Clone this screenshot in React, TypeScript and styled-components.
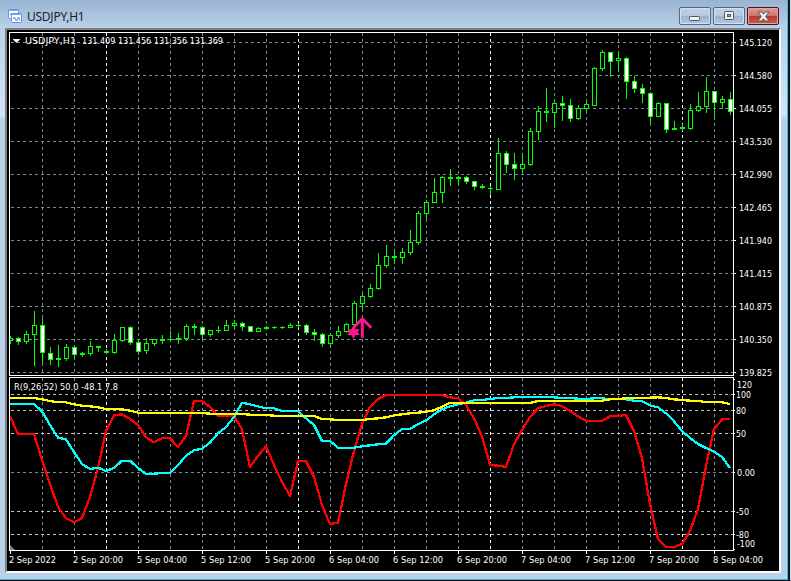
import React from "react";
import styled, { createGlobalStyle } from "styled-components";

const Global = createGlobalStyle`
  html, body { margin: 0; padding: 0; background: #b9d1ea; overflow: hidden; }
  * { box-sizing: border-box; }
`;

const Window = styled.div`
  width: 791px;
  height: 581px;
  display: flex;
  flex-direction: column;
  background: #b9d1ea;
  border-right: 1px solid #d5dbe2;
  border-bottom: 1px solid #101820;
`;

const Edge = styled.div`
  flex: 1;
  display: flex;
  flex-direction: column;
  border-right: 2px solid #101418;
`;

const Frame = styled.div`
  flex: 1;
  display: flex;
  flex-direction: column;
  padding: 0 6px 6px 5px;
  border-right: 1px solid #35c0dc;
  border-bottom: 1px solid #35b4cf;
  background: linear-gradient(180deg, #99b4d1 0, #b9d1ea 28px, #d3e3f4 115px, #b9d1ea 119px);
`;

const TitleBar = styled.header`
  height: 28px;
  display: flex;
  align-items: flex-start;
  padding: 0 2px 0 3px;
`;

const TitleIcon = styled.svg`
  width: 15px;
  height: 15px;
  margin-top: 9px;
`;

const Title = styled.h1`
  margin: 7px 0 0 4px;
  flex: 1;
  font: 400 12px/19px "Noto Sans", sans-serif;
  letter-spacing: -0.25px;
  color: #1c222b;
`;

const Buttons = styled.div`
  display: flex;
  gap: 2px;
  margin-top: 7px;
`;

const CaptionButton = styled.button<{ $close?: boolean }>`
  width: 32px;
  height: 18px;
  padding: 0;
  display: flex;
  align-items: center;
  justify-content: center;
  border: 1px solid ${(p) => (p.$close ? "#431422" : "#56697f")};
  border-radius: 2px;
  box-shadow: inset 0 0 0 1px ${(p) => (p.$close ? "#e3a79f" : "#d3e0ef")};
  background: ${(p) =>
    p.$close
      ? "linear-gradient(180deg, #dd9c91 0, #cf7569 48%, #b5382a 50%, #c8604a 100%)"
      : "linear-gradient(180deg, #c1d2e6 0, #b4c8df 48%, #9bb3cf 50%, #b1c8e1 100%)"};
`;

const Client = styled.main`
  flex: 1;
  border-style: solid;
  border-width: 2px;
  border-color: #808080 #f6f8fa #f6f8fa #808080;
  background: #000;
  overflow: hidden;
`;

const Chart = styled.svg`
  display: block;
  text {
    font-family: "DejaVu Sans Condensed", "DejaVu Sans", sans-serif;
    font-size: 9.5px;
    fill: #fff;
  }
`;

type Kind = "h" | "w" | "d";
type Candle = [number, number, number, number, Kind];

// high, body top, body bottom, low; h = hollow, w = filled, d = doji
const candles: Candle[] = [
  [336,338,341,344,"h"],[337,338,342,345,"w"],[331,334,342,344,"h"],[311,325,335,366,"h"],
  [318,325,353,363,"w"],[347,353,360,365,"w"],[345,358,360,367,"d"],[344,347,359,361,"h"],
  [346,347,355,358,"w"],[352,353,355,357,"d"],[341,346,354,356,"h"],[346,346,348,352,"d"],
  [349,351,353,354,"d"],[334,340,353,354,"h"],[327,327,341,342,"h"],[326,327,343,345,"w"],
  [340,342,352,355,"w"],[338,343,351,354,"h"],[339,339,344,346,"h"],[335,339,341,344,"d"],
  [331,339,340,342,"d"],[333,338,340,344,"d"],[324,326,339,341,"h"],[324,326,328,335,"d"],
  [326,327,335,339,"w"],[330,330,335,337,"h"],[326,330,331,333,"d"],[320,325,331,331,"h"],
  [320,323,326,329,"h"],[322,323,327,331,"w"],[326,326,332,332,"w"],[327,328,332,332,"h"],
  [326,327,329,330,"d"],[326,327,328,329,"d"],[326,327,328,329,"d"],[323,325,328,328,"h"],
  [323,325,326,328,"d"],[324,325,333,335,"w"],[329,332,335,341,"w"],[333,334,344,347,"w"],
  [333,335,344,346,"h"],[326,331,336,338,"h"],[323,324,332,333,"h"],[301,303,325,325,"h"],
  [293,296,304,310,"h"],[284,288,297,298,"h"],[253,265,289,290,"h"],[245,256,266,268,"h"],
  [249,256,258,264,"d"],[248,252,258,264,"h"],[230,242,253,255,"h"],[211,213,243,245,"h"],
  [200,202,214,219,"h"],[178,192,203,203,"h"],[176,177,193,203,"h"],[169,177,179,186,"d"],
  [176,177,179,185,"d"],[176,177,182,184,"w"],[181,181,187,190,"w"],[184,186,188,189,"d"],
  [186,188,189,195,"d"],[138,153,190,190,"h"],[151,153,165,173,"w"],[153,164,169,180,"w"],
  [153,164,169,172,"h"],[128,131,165,166,"h"],[106,111,132,140,"h"],[88,111,113,122,"d"],
  [102,103,113,128,"h"],[96,103,106,121,"w"],[99,105,119,122,"w"],[105,108,119,120,"h"],
  [100,104,109,111,"h"],[67,68,106,106,"h"],[50,52,69,71,"h"],[52,52,62,77,"w"],
  [52,58,61,72,"h"],[57,58,82,99,"w"],[76,81,89,93,"w"],[84,88,94,103,"w"],
  [92,93,117,123,"w"],[102,103,117,117,"h"],[103,103,130,133,"w"],[121,128,130,130,"d"],
  [124,127,129,131,"d"],[104,110,129,130,"h"],[92,106,111,112,"h"],[77,91,107,113,"h"],
  [91,91,103,118,"w"],[96,99,103,109,"h"],[92,99,112,115,"w"],
];

// Oscillator samples, in thirds of a pixel below y = 370, one per bar
const red = [
  139,192,192,192,270,342,411,444,457,444,381,294,183,136,133,147,165,202,217,205,205,231,198,93,93,111,138,138,138,
  178,291,258,229,285,336,378,273,273,321,405,462,458,342,243,162,110,87,75,75,75,75,75,75,75,75,82,85,105,145,199,285,287,
  291,223,180,141,115,108,103,108,123,139,153,153,153,139,138,135,183,264,402,507,531,531,522,483,417,288,177,148,147,
];
const cyan = [
  102,102,102,102,124,165,203,208,247,282,297,293,303,294,272,272,294,312,311,309,309,286,257,241,236,218,190,171,141,
  98,103,109,115,115,123,123,124,145,165,213,213,233,234,233,229,226,223,221,196,177,176,163,151,133,118,109,103,98,91,90,87,84,
  84,82,81,81,81,81,82,84,84,86,87,85,85,88,88,88,92,94,106,112,130,154,183,204,222,234,245,261,294,
];
const yellow = [
  84,84,84,84,88,93,97,97,103,107,109,112,117,117,118,122,128,129,129,129,129,129,129,129,129,131,132,132,132,
  132,134,134,135,137,137,138,138,138,138,147,148,150,150,150,150,147,145,142,136,133,130,128,125,121,110,99,99,99,99,99,99,99,
  99,99,99,99,93,93,93,93,92,92,92,92,92,88,87,85,84,84,83,82,84,88,90,92,93,96,96,97,102,
];

const prices: [string, number][] = [
  ["145.120",42],["144.580",75],["144.055",108],["143.530",141],["142.990",174],["142.465",207],
  ["141.940",240],["141.415",273],["140.875",306],["140.350",339],["139.825",372],
];
const levels: [string, number, number, number][] = [
  ["120",384,737,15],["100",394,736,15],["80",410,736,10],["50",433,736,10],["0.00",472,737,18],
  ["-50",511,736,13],["-80",534,736,13],["-100",543,737,18],
];
const times = [
  "2 Sep 2022","2 Sep 20:00","5 Sep 04:00","5 Sep 12:00","5 Sep 20:00","6 Sep 04:00",
  "6 Sep 12:00","6 Sep 20:00","7 Sep 04:00","7 Sep 12:00","7 Sep 20:00","8 Sep 04:00",
];

const GridLines = () => (
  <g fill="none" stroke="#778899" strokeDasharray="3 3" shapeRendering="crispEdges">
    {Array.from({ length: 22 }, (_, k) => {
      const x = 42.5 + k * 32;
      return (
        <g key={k} stroke={k % 6 === 2 ? "#fff" : undefined}>
          <path d={`M${x} 33V375`} />
          <path d={`M${x} 378V550`} />
        </g>
      );
    })}
    {prices.map(([, y]) => (
      <path key={y} d={`M11 ${y + 0.5}H733`} />
    ))}
    {[394, 410, 433, 472, 511, 534].map((y) => (
      <path key={y} d={`M11 ${y + 0.5}H733`} stroke={y === 472 ? "#778899" : "#c0c0c0"} />
    ))}
  </g>
);

const Bars = () => (
  <g shapeRendering="crispEdges" clipPath="url(#plot)">
    {candles.map(([hi, top, bot, lo, kind], i) => {
      const x = 10 + i * 8;
      return (
        <g key={i}>
          <rect x={x} y={hi} width={1} height={lo - hi} fill="#0f0" />
          <rect x={x - 2} y={top} width={5} height={bot - top} fill="#0f0" />
          {kind !== "d" && (
            <rect x={x - 1} y={top + 1} width={3} height={bot - top - 2} fill={kind === "w" ? "#fff" : "#000"} />
          )}
        </g>
      );
    })}
  </g>
);

const Oscillator = ({ data, color }: { data: number[]; color: string }) => (
  <polyline
    points={data.map((v, i) => `${10 + i * 8},${(370 + v / 3).toFixed(2)}`).join(" ")}
    fill="none"
    stroke={color}
    strokeWidth={2.3}
    strokeLinejoin="round"
    shapeRendering="crispEdges"
  />
);

const Label = ({ x, y, w, children }: { x: number; y: number; w: number; children: string }) => (
  <text x={x} y={y} textLength={w} lengthAdjust="spacingAndGlyphs">{children}</text>
);

const PriceChart = () => (
  <Chart width={772} height={541} viewBox="7 30 772 541" role="img" aria-label="USDJPY H1">
    <defs>
      <clipPath id="plot"><rect x={10} y={33} width={723} height={517} /></clipPath>
    </defs>
    <GridLines />
    <Bars />
    <g clipPath="url(#plot)">
      <Oscillator data={red} color="#f00" />
      <Oscillator data={cyan} color="#0ff" />
      <Oscillator data={yellow} color="#ff0" />
    </g>
    <path d="M10 545v5h5z" fill="#778899" />
    <path d="M353.500 325l2 4.200h4.300l-2 2.900 2 3h-4.300l-2 4-2-4h-4.300l2-3-2-2.900h4.300z" fill="#ff1493" />
    <path d="M362.300 337.700V319.500M353.600 327.500l8.700-8.700 9 9" fill="none" stroke="#ff1493" strokeWidth={3} />
    <g fill="#fff" shapeRendering="crispEdges">
      <rect x={9} y={32} width={725} height={1} />
      <rect x={9} y={375} width={725} height={1} />
      <rect x={9} y={377} width={725} height={1} />
      <rect x={9} y={550} width={725} height={1} />
      <rect x={9} y={32} width={1} height={344} />
      <rect x={9} y={377} width={1} height={174} />
      <rect x={733} y={32} width={1} height={344} />
      <rect x={733} y={377} width={1} height={174} />
      {prices.map(([, y]) => <rect key={y} x={734} y={y} width={2} height={1} />)}
      {[379, 394, 410, 433, 472, 511, 534, 549].map((y) => <rect key={y} x={734} y={y} width={1} height={1} />)}
      {times.map((t, i) => <rect key={t} x={10 + i * 64} y={551} width={1} height={3} />)}
    </g>
    <path d="M12.500 39h8l-4 4z" fill="#fff" />
    <Label x={25} y={44} w={51}>USDJPY,H1</Label>
    <Label x={82} y={44} w={141}>131.409 131.456 131.356 131.369</Label>
    <Label x={14} y={390} w={104}>R(9,26,52) 50.0 -48.1 7.8</Label>
    {prices.map(([t, y]) => <Label key={t} x={739} y={y + 4} w={33}>{t}</Label>)}
    {levels.map(([t, y, x, w]) => <Label key={t} x={x} y={y + 4} w={w}>{t}</Label>)}
    {times.map((t, i) => <Label key={t} x={9 + i * 64} y={563} w={i ? 50 : 47}>{t}</Label>)}
  </Chart>
);

export default function App() {
  return (
    <>
      <Global />
      <Window>
        <Edge>
          <Frame>
            <TitleBar>
              <TitleIcon viewBox="0 0 15 15">
                <rect x=".5" y=".5" width="10" height="9" rx="1" fill="#fff" stroke="#5a96e6" />
                <path d="M1 1.500h9" stroke="#78a9ee" strokeWidth="1" />
                <path d="M2 6l1.500-2 1.500 2 2-2" fill="none" stroke="#4a86dc" />
                <rect x="3.500" y="4.500" width="10" height="9" rx="1" fill="#fff" stroke="#5a96e6" />
                <path d="M4 5.500h9" stroke="#78a9ee" strokeWidth="1" />
                <path d="M5 10l1.500-2L8 11.500h1L10.500 8l1.500 3.500" fill="none" stroke="#4a86dc" />
              </TitleIcon>
              <Title>USDJPY,H1</Title>
              <Buttons>
                <CaptionButton aria-label="Minimize">
                  <svg width="12" height="12" viewBox="0 0 12 12"><rect x=".5" y="6.500" width="10" height="4" rx=".8" fill="#f4f4ee" stroke="#535666" /></svg>
                </CaptionButton>
                <CaptionButton aria-label="Maximize">
                  <svg width="12" height="10" viewBox="0 0 12 10"><rect x="1.500" y=".5" width="9" height="8" rx=".8" fill="#f4f4ee" stroke="#535666" /><rect x="4.500" y="3.500" width="3" height="2" fill="#9db2cc" stroke="#535666" /></svg>
                </CaptionButton>
                <CaptionButton $close aria-label="Close">
                  <svg width="13" height="11" viewBox="0 0 13 11"><path d="M1 1h3.500l2 2.200L8.500 1H12L8.700 5.500 12 10H8.500l-2-2.200-2 2.200H1l3.300-4.500z" fill="#f4f4f4" stroke="#535666" /></svg>
                </CaptionButton>
              </Buttons>
            </TitleBar>
            <Client>
              <PriceChart />
            </Client>
          </Frame>
        </Edge>
      </Window>
    </>
  );
}
